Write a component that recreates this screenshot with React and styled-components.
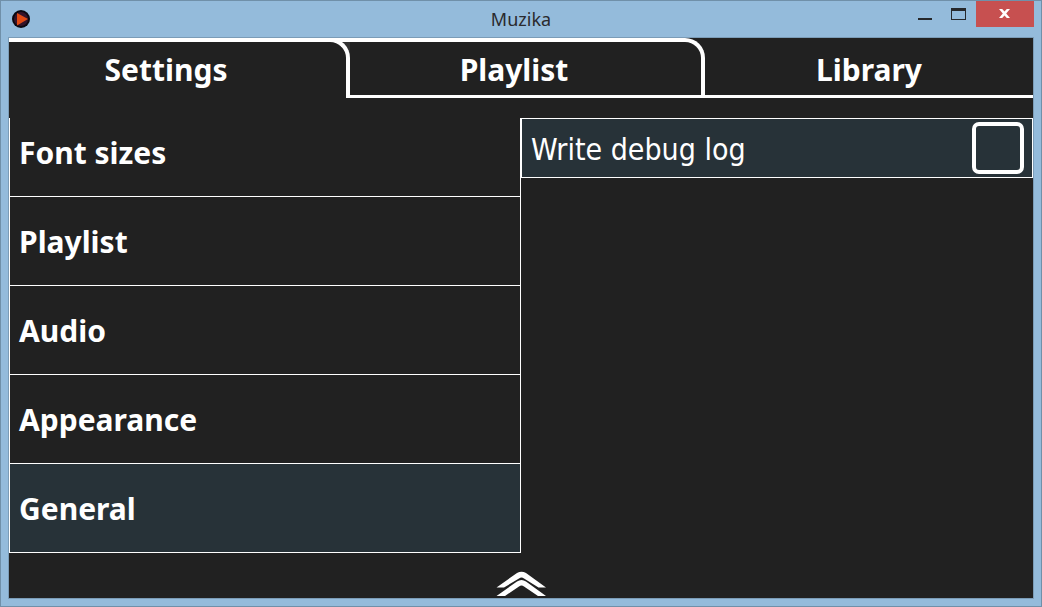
import React, { useState } from "react";
import styled, { createGlobalStyle } from "styled-components";

const headingFont = `"Noto Sans", sans-serif`;
const optionFont = `"DejaVu Sans Condensed", "DejaVu Sans", sans-serif`;

const Global = createGlobalStyle`
  *, *::before, *::after { box-sizing: border-box; }
  html, body { margin: 0; }
  button { appearance: none; border: 0; padding: 0; background: none; color: inherit; font-family: inherit; }
`;

const Frame = styled.div`
  display: flex;
  flex-direction: column;
  height: 100vh;
  padding: 0 7px 7px;
  border: 1px solid #7090a9;
  background: #94bbdb;
  font-family: ${headingFont};
`;

const TitleBar = styled.header`
  display: grid;
  grid-template-columns: 1fr auto 1fr;
  height: 36px;
  flex: none;
`;

const AppIcon = styled.svg`
  width: 18px;
  height: 18px;
  margin: 9px 4px;
`;

const Title = styled.h1`
  margin: 0;
  color: #2a2a2e;
  font-size: 18px;
  font-weight: 400;
  line-height: 36px;
`;

const Controls = styled.div`
  display: flex;
  justify-content: flex-end;
  height: 26px;
`;

const ControlButton = styled.button`
  display: grid;
  place-items: center;
  width: ${(p) => (p.$close ? 58 : 34)}px;
  background: ${(p) => (p.$close ? "#c75050" : "transparent")};
`;

const Client = styled.main`
  display: flex;
  flex-direction: column;
  flex: 1;
  min-height: 0;
  border: 1px solid #7b9cb7;
  background: #212121;
  color: #fff;
`;

const Tabs = styled.nav`
  display: grid;
  grid-template: 60px / 341fr 355fr 328fr;
  flex: none;
`;

const Tab = styled.button`
  position: relative;
  z-index: ${(p) => p.$level};
  display: flex;
  justify-content: center;
  align-items: flex-start;
  margin-left: ${(p) => (p.$tucked ? -20 : 0)}px;
  padding: ${(p) => (p.$last ? 4 : 0)}px ${(p) => (p.$last ? 0 : 23)}px 0 ${(p) => (p.$tucked ? 20 : 0)}px;
  border: 0 solid #fff;
  border-width: ${(p) => (p.$last ? "0 0 3px" : p.$active ? "4px 4px 0 0" : "4px 4px 3px 0")};
  border-top-right-radius: ${(p) => (p.$last ? 0 : 20)}px;
  background: ${(p) => (p.$tucked ? "linear-gradient(90deg, #333 20px, #212121 20px)" : "#212121")};
  font-size: 30px;
  font-weight: 700;
  line-height: 56px;
`;

const Body = styled.div`
  display: grid;
  grid-template-columns: 1fr 1fr;
  flex: 1;
  min-height: 0;
  padding-top: 20px;
`;

const Categories = styled.ul`
  display: flex;
  flex-direction: column;
  justify-content: flex-end;
  min-height: 0;
  margin: 0;
  padding: 0;
  overflow: hidden;
  border: 1px solid #fff;
  border-width: 0 1px;
  list-style: none;
`;

const Category = styled.li`
  flex: none;
  height: 89px;
  border-bottom: 1px solid #fff;
  background: ${(p) => (p.$selected ? "#273238" : "transparent")};
`;

const CategoryButton = styled.button`
  width: 100%;
  height: 100%;
  padding: 0 9px;
  font-size: 30px;
  font-weight: 700;
  text-align: left;
`;

const OptionRow = styled.label`
  display: flex;
  align-items: center;
  justify-content: space-between;
  height: 60px;
  padding: 0 8px 0 9px;
  border: 1px solid #fff;
  background: #273238;
`;

const OptionName = styled.span`
  padding-top: 2px;
  font-family: ${optionFont};
  font-size: 30px;
`;

const CheckBox = styled.input`
  appearance: none;
  width: 52px;
  height: 52px;
  margin: 0;
  border: 4px solid #fff;
  border-radius: 7px;
  background: transparent;
  &:checked { background: #fff content-box; padding: 6px; }
`;

const Footer = styled.footer`
  display: flex;
  justify-content: center;
  align-items: flex-end;
  flex: none;
  height: 45px;
`;

const ExpandButton = styled.button`
  display: block;
  width: 50px;
  height: 28px;
`;

const categories = ["Font sizes", "Playlist", "Audio", "Appearance", "General"];

export default function App() {
  const [selected, setSelected] = useState("General");
  return (
    <>
      <Global />
      <Frame>
        <TitleBar>
          <AppIcon viewBox="0 0 18 18" aria-hidden="true">
            <circle cx="9" cy="9" r="9" fill="#0b0810" />
            <circle cx="9" cy="9" r="7" fill="#35142a" />
            <path d="M5 3 L16 9 L5 15.5 Z" fill="#e04a14" />
          </AppIcon>
          <Title>Muzika</Title>
          <Controls>
            <ControlButton aria-label="Minimize">
              <svg width="14" height="12"><path d="M0 10H14V12H0Z" fill="#26282b" /></svg>
            </ControlButton>
            <ControlButton aria-label="Maximize">
              <svg width="16" height="12"><path d="M0 0H15V12H0ZM1 3V11H14V3Z" fillRule="evenodd" fill="#26282b" /></svg>
            </ControlButton>
            <ControlButton $close aria-label="Close">
              <svg width="12" height="10">
                <path d="M0 0H3.200L5.500 2.600L7.800 0H11L7.200 4.500L11 9H7.800L5.500 6.400L3.200 9H0L3.800 4.500Z" fill="#fff" />
              </svg>
            </ControlButton>
          </Controls>
        </TitleBar>
        <Client>
          <Tabs>
            <Tab $level={3} $active>Settings</Tab>
            <Tab $level={2} $tucked>Playlist</Tab>
            <Tab $level={1} $last>Library</Tab>
          </Tabs>
          <Body>
            <Categories>
              {categories.map((name) => (
                <Category key={name} $selected={name === selected}>
                  <CategoryButton onClick={() => setSelected(name)}>{name}</CategoryButton>
                </Category>
              ))}
            </Categories>
            <div>
              <OptionRow>
                <OptionName>Write debug log</OptionName>
                <CheckBox type="checkbox" />
              </OptionRow>
            </div>
          </Body>
          <Footer>
            <ExpandButton aria-label="Show player">
              <svg width="50" height="28" viewBox="0 0 50 28">
                <path d="M.5 17.500L21 3Q25.500 .5 30 3L50 17.500H42.500L28 8.500Q25.500 6.500 23 8.500L8 17.500Z" fill="#fff" />
                <path d="M.5 26L21 11.500Q25.500 8.500 30 11.500L50 26H42L28 16.500Q25.500 14.500 23 16.500L9 26Z" fill="#fff" />
              </svg>
            </ExpandButton>
          </Footer>
        </Client>
      </Frame>
    </>
  );
}
